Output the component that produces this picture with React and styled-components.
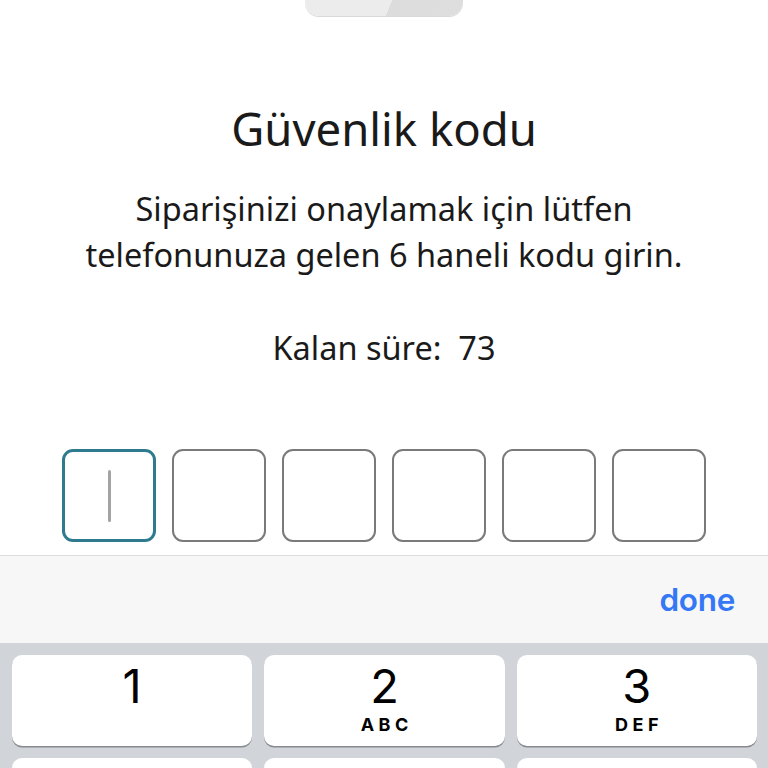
import React from "react";
import styled, { createGlobalStyle } from "styled-components";

const Global = createGlobalStyle`
  html, body { margin: 0; padding: 0; background: #ffffff; }
  body { font-family: "Noto Sans", "Open Sans", sans-serif; }
  * { box-sizing: border-box; }
`;

const Page = styled.div`
  width: 768px;
  height: 768px;
  overflow: hidden;
  display: flex;
  flex-direction: column;
  align-items: stretch;
  background: #ffffff;
`;

const Content = styled.main`
  display: flex;
  flex-direction: column;
  align-items: center;
`;

const Handle = styled.div`
  width: 158px;
  height: 16px;
  border-radius: 0 0 14px 14px;
  background: linear-gradient(112deg, #ececec 0%, #ececec 53%, #dcdcdc 53%, #dedede 100%);
  box-shadow: 0 1px 0 #d9d9d9;
`;

const Title = styled.h1`
  margin: 84px 0 0;
  font-family: "Noto Sans", sans-serif;
  font-weight: 400;
  font-size: 45.5px;
  line-height: 56px;
  color: #1a1a1a;
`;

const Description = styled.p`
  margin: 30px 0 0;
  font-family: "Noto Sans", sans-serif;
  font-size: 32.5px;
  line-height: 46px;
  text-align: center;
  color: #1a1a1a;
`;

const Timer = styled.p`
  margin: 50px 0 0;
  font-family: "Noto Sans", sans-serif;
  font-size: 32.5px;
  line-height: 40px;
  color: #1a1a1a;
  white-space: pre;
`;

const CodeRow = styled.div`
  margin-top: 81px;
  display: flex;
  gap: 16px;
`;

const CodeBox = styled.div`
  width: 94px;
  height: 93px;
  border-radius: 11px;
  border: ${(p) => (p.$active ? "3px solid #2e7b90" : "2px solid #7a7a7a")};
  display: flex;
  align-items: center;
  justify-content: center;
`;

const Caret = styled.span`
  width: 3px;
  height: 52px;
  border-radius: 2px;
  background: #a3a3a3;
`;

const KeyboardArea = styled.section`
  margin-top: auto;
  height: 213px;
  flex-shrink: 0;
  display: flex;
  flex-direction: column;
  overflow: hidden;
`;

const Toolbar = styled.div`
  height: 88px;
  flex-shrink: 0;
  border-top: 1px solid #dcdcdc;
  background: #f7f7f7;
  display: flex;
  align-items: center;
  justify-content: flex-end;
  padding: 0 33px 0 0;
`;

const Done = styled.button`
  border: none;
  background: none;
  padding: 0;
  font-family: "Inter", "Roboto", sans-serif;
  font-weight: 600;
  font-size: 31.5px;
  letter-spacing: -0.3px;
  color: #3478f6;
`;

const Keys = styled.div`
  flex: 1;
  background: #d1d4d9;
  display: grid;
  grid-template-columns: repeat(3, 1fr);
  grid-auto-rows: 91px;
  gap: 12px;
  padding: 12px 11px 0 12px;
`;

const Key = styled.div`
  height: 91px;
  border-radius: 10px;
  background: #ffffff;
  box-shadow: 0 1.5px 0 #878a8f;
  display: flex;
  flex-direction: column;
  align-items: center;
  padding-top: 2px;
`;

const Digit = styled.span`
  font-family: "Inter", "Roboto", sans-serif;
  font-weight: 400;
  font-size: 47px;
  line-height: 57px;
  color: #000;
`;

const Letters = styled.span`
  font-family: "Inter", "Roboto", sans-serif;
  font-weight: 700;
  font-size: 18px;
  line-height: 22px;
  letter-spacing: 4.5px;
  margin-left: 4.5px;
  color: #000;
`;

const topRow = [
  ["1", ""],
  ["2", "ABC"],
  ["3", "DEF"],
];

export default function App() {
  return (
    <Page>
      <Global />
      <Content>
        <Handle />
        <Title>Güvenlik kodu</Title>
        <Description>
          Siparişinizi onaylamak için lütfen
          <br />
          telefonunuza gelen 6 haneli kodu girin.
        </Description>
        <Timer>Kalan süre:  73</Timer>
        <CodeRow>
          {[0, 1, 2, 3, 4, 5].map((i) => (
            <CodeBox key={i} $active={i === 0}>
              {i === 0 && <Caret />}
            </CodeBox>
          ))}
        </CodeRow>
      </Content>
      <KeyboardArea>
        <Toolbar>
          <Done>done</Done>
        </Toolbar>
        <Keys>
          {topRow.map(([d, l]) => (
            <Key key={d}>
              <Digit>{d}</Digit>
              {l && <Letters>{l}</Letters>}
            </Key>
          ))}
          <Key />
          <Key />
          <Key />
        </Keys>
      </KeyboardArea>
    </Page>
  );
}
